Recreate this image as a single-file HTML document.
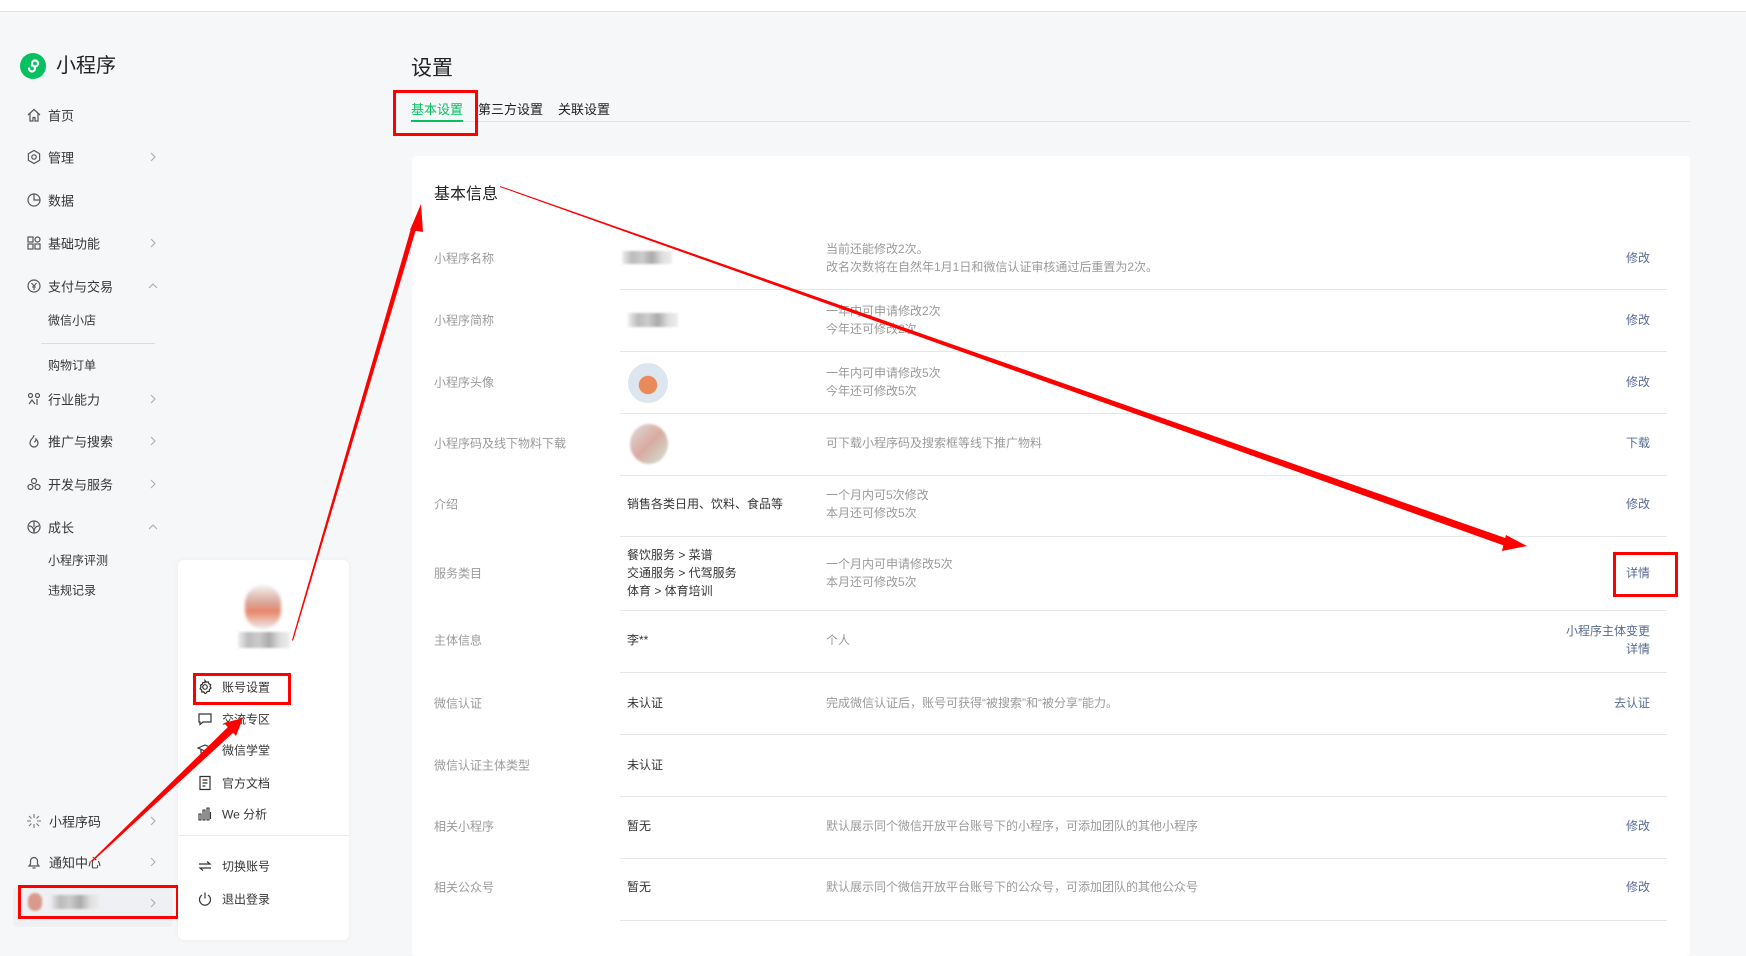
<!DOCTYPE html>
<html><head><meta charset="utf-8"><style>
*{margin:0;padding:0;box-sizing:border-box}
body{width:1746px;height:929px;overflow:hidden;background:#f6f7f9;font-family:"Liberation Sans","Noto Sans CJK SC",sans-serif;position:relative;color:#353535}
.a{position:absolute;white-space:nowrap}
.top{left:0;top:0;width:1746px;height:12px;background:#fff;border-bottom:1px solid #e4e4e4}
.nav{font-size:13px;color:#353535;left:48px;transform:translateY(-50%)}
.sub{font-size:12px;color:#353535;left:48px;transform:translateY(-50%)}
.ic{left:26px;width:16px;height:16px;transform:translateY(-50%)}
.chev{left:148px;width:10px;height:10px;transform:translateY(-50%)}
.card{left:412px;top:156px;width:1278px;height:800px;background:#fff;border-radius:4px}
.lbl{left:434px;font-size:12px;color:#9a9a9a;transform:translateY(-50%)}
.val{left:627px;font-size:12px;color:#353535;transform:translateY(-50%);line-height:18px}
.desc{left:826px;font-size:12px;color:#9a9a9a;transform:translateY(-50%);line-height:18px}
.act{right:96px;font-size:12px;color:#576b95;transform:translateY(-50%);text-align:right;line-height:18px}
.ln{left:620px;width:1047px;height:1px;background:#e7e7eb}
.pm{left:222px;font-size:12px;color:#353535;transform:translateY(-50%)}
.pi{left:197px;width:16px;height:16px;transform:translateY(-50%)}
.red{border:3px solid #f00}
.blur{background:linear-gradient(90deg,#eee,#bbb,#ccc,#aaa,#ddd,#eee);filter:blur(1px)}
</style></head><body>
<div class="a top"></div>

<!-- sidebar -->
<svg class="a" style="left:20px;top:53px" width="26" height="26" viewBox="0 0 26 26"><circle cx="13" cy="13" r="13" fill="#07c160"/><path d="M9 15.5a3 3 0 1 0 3-3v-2a3 3 0 1 1 3 3" stroke="#fff" stroke-width="2.2" fill="none" stroke-linecap="round"/></svg>
<div class="a" style="left:56px;top:53px;font-size:20px;line-height:26px;color:#222">小程序</div>

<svg class="a ic" style="top:115px" viewBox="0 0 16 16"><path d="M2 8L8 2.5 14 8M4 6.5V14h3v-3.5h2V14h3V6.5" fill="none" stroke="#555" stroke-width="1.2"/></svg>
<div class="a nav" style="top:115px">首页</div>
<svg class="a ic" style="top:157px" viewBox="0 0 16 16"><path d="M8 1.5l5.6 3.2v6.6L8 14.5 2.4 11.3V4.7z" fill="none" stroke="#555" stroke-width="1.2"/><circle cx="8" cy="8" r="2.2" fill="none" stroke="#555" stroke-width="1.2"/></svg>
<div class="a nav" style="top:157px">管理</div>
<svg class="a ic" style="top:200px" viewBox="0 0 16 16"><circle cx="8" cy="8" r="6" fill="none" stroke="#555" stroke-width="1.2"/><path d="M8 2v6h6" fill="none" stroke="#555" stroke-width="1.2"/></svg>
<div class="a nav" style="top:200px">数据</div>
<svg class="a ic" style="top:243px" viewBox="0 0 16 16"><g fill="none" stroke="#555" stroke-width="1.2"><rect x="2" y="2" width="5" height="5"/><circle cx="11.5" cy="4.5" r="2.5"/><rect x="2" y="9" width="5" height="5"/><rect x="9" y="9" width="5" height="5"/></g></svg>
<div class="a nav" style="top:243px">基础功能</div>
<svg class="a ic" style="top:286px" viewBox="0 0 16 16"><circle cx="8" cy="8" r="6" fill="none" stroke="#555" stroke-width="1.2"/><path d="M5.5 5l2.5 3 2.5-3M8 8v4M6 9h4" fill="none" stroke="#555" stroke-width="1.1"/></svg>
<div class="a nav" style="top:286px">支付与交易</div>
<div class="a sub" style="top:320px">微信小店</div>
<div class="a" style="left:41px;top:343px;width:114px;height:1px;background:#dcdde0"></div>
<div class="a sub" style="top:365px">购物订单</div>
<svg class="a ic" style="top:399px" viewBox="0 0 16 16"><g fill="none" stroke="#555" stroke-width="1.2"><circle cx="4.5" cy="4.5" r="2"/><circle cx="11.5" cy="4.5" r="2"/><path d="M3 13l3-4 3 4M11 8v6"/></g></svg>
<div class="a nav" style="top:399px">行业能力</div>
<svg class="a ic" style="top:441px" viewBox="0 0 16 16"><path d="M8 2c0 3-4 4-4 8a4 4 0 0 0 8 0c0-2-1-3-2-4 0 2-1 3-2 3" fill="none" stroke="#555" stroke-width="1.2"/></svg>
<div class="a nav" style="top:441px">推广与搜索</div>
<svg class="a ic" style="top:484px" viewBox="0 0 16 16"><g fill="none" stroke="#555" stroke-width="1.2"><circle cx="8" cy="5" r="2.5"/><circle cx="4.5" cy="11" r="2.5"/><circle cx="11.5" cy="11" r="2.5"/></g></svg>
<div class="a nav" style="top:484px">开发与服务</div>
<svg class="a ic" style="top:527px" viewBox="0 0 16 16"><g fill="none" stroke="#555" stroke-width="1.2"><circle cx="8" cy="8" r="6"/><path d="M3 7c3 0 5 2 5 7M13 7c-3 0-5 2-5 7M8 2v6"/></g></svg>
<div class="a nav" style="top:527px">成长</div>
<div class="a sub" style="top:560px">小程序评测</div>
<div class="a sub" style="top:590px">违规记录</div>

<svg class="a chev" style="top:157px" viewBox="0 0 10 10"><path d="M3 1l4 4-4 4" fill="none" stroke="#aaa"/></svg>
<svg class="a chev" style="top:243px" viewBox="0 0 10 10"><path d="M3 1l4 4-4 4" fill="none" stroke="#aaa"/></svg>
<svg class="a chev" style="top:286px" viewBox="0 0 10 10"><path d="M1 7l4-4 4 4" fill="none" stroke="#aaa"/></svg>
<svg class="a chev" style="top:399px" viewBox="0 0 10 10"><path d="M3 1l4 4-4 4" fill="none" stroke="#aaa"/></svg>
<svg class="a chev" style="top:441px" viewBox="0 0 10 10"><path d="M3 1l4 4-4 4" fill="none" stroke="#aaa"/></svg>
<svg class="a chev" style="top:484px" viewBox="0 0 10 10"><path d="M3 1l4 4-4 4" fill="none" stroke="#aaa"/></svg>
<svg class="a chev" style="top:527px" viewBox="0 0 10 10"><path d="M1 7l4-4 4 4" fill="none" stroke="#aaa"/></svg>

<svg class="a ic" style="top:821px" viewBox="0 0 16 16"><g stroke="#777" stroke-width="1.1"><path d="M8 1v4M8 11v4M1 8h4M11 8h4M3 3l2.5 2.5M10.5 10.5L13 13M13 3l-2.5 2.5M5.5 10.5L3 13"/></g></svg>
<div class="a nav" style="top:821px;left:49px">小程序码</div>
<svg class="a chev" style="top:821px" viewBox="0 0 10 10"><path d="M3 1l4 4-4 4" fill="none" stroke="#aaa"/></svg>
<svg class="a ic" style="top:862px" viewBox="0 0 16 16"><path d="M3 12h10l-1.5-2V7a3.5 3.5 0 0 0-7 0v3zM6.5 14h3" fill="none" stroke="#555" stroke-width="1.2"/></svg>
<div class="a nav" style="top:862px;left:49px">通知中心</div>
<svg class="a chev" style="top:862px" viewBox="0 0 10 10"><path d="M3 1l4 4-4 4" fill="none" stroke="#aaa"/></svg>
<div class="a" style="left:13px;top:887px;width:160px;height:40px;background:#eef0f3;border-radius:4px"></div>
<div class="a" style="left:28px;top:893px;width:14px;height:18px;background:#d89a8a;border-radius:7px;filter:blur(1px)"></div>
<div class="a blur" style="left:50px;top:895px;width:50px;height:14px"></div>
<svg class="a chev" style="top:903px" viewBox="0 0 10 10"><path d="M3 1l4 4-4 4" fill="none" stroke="#aaa"/></svg>
<div class="a red" style="left:18px;top:885px;width:161px;height:34px"></div>

<!-- popup -->
<div class="a" style="left:178px;top:560px;width:171px;height:380px;background:#fff;border-radius:6px;box-shadow:0 0 6px rgba(0,0,0,.05)"></div>
<div class="a" style="left:245px;top:585px;width:36px;height:44px;background:linear-gradient(#f3f3f3,#d9a79a 40%,#e8856a 60%,#eee);border-radius:18px;filter:blur(1.5px)"></div>
<div class="a blur" style="left:238px;top:632px;width:52px;height:16px"></div>
<svg class="a pi" style="top:687px" viewBox="0 0 16 16"><g fill="none" stroke="#333" stroke-width="1.2"><circle cx="8" cy="8" r="2.3"/><path d="M8 1.5l1.2 1.6 2-.3.6 1.9 1.8.9-.5 1.9.9 1.7-1.6 1.2-.1 2-2 .1-1.2 1.6L8 14.5l-1.2-1.6-2 .1-.1-2-1.6-1.2.9-1.7-.5-1.9 1.8-.9.6-1.9 2 .3z"/></g></svg>
<div class="a pm" style="top:687px">账号设置</div>
<svg class="a pi" style="top:719px" viewBox="0 0 16 16"><path d="M2 3h12v8H6l-3 2.5V11H2z" fill="none" stroke="#333" stroke-width="1.2"/></svg>
<div class="a pm" style="top:719px">交流专区</div>
<svg class="a pi" style="top:750px" viewBox="0 0 16 16"><path d="M1 6l7-3 7 3-7 3zM4 7.5V11c2 2 6 2 8 0V7.5" fill="none" stroke="#333" stroke-width="1.2"/></svg>
<div class="a pm" style="top:750px">微信学堂</div>
<svg class="a pi" style="top:783px" viewBox="0 0 16 16"><path d="M3 1.5h10v13H3zM5.5 5h5M5.5 8h5M5.5 11h3" fill="none" stroke="#333" stroke-width="1.2"/></svg>
<div class="a pm" style="top:783px">官方文档</div>
<svg class="a pi" style="top:814px" viewBox="0 0 16 16"><path d="M2 14V8h2v6zM6 14V4h2v10zM10 14V2h2v12zM13.5 13V6" fill="none" stroke="#333" stroke-width="1.1"/></svg>
<div class="a pm" style="top:814px">We 分析</div>
<div class="a" style="left:178px;top:835px;width:171px;height:1px;background:#ececec"></div>
<svg class="a pi" style="top:866px" viewBox="0 0 16 16"><path d="M2 6h11l-3-2.5M14 10H3l3 2.5" fill="none" stroke="#333" stroke-width="1.2"/></svg>
<div class="a pm" style="top:866px">切换账号</div>
<svg class="a pi" style="top:899px" viewBox="0 0 16 16"><path d="M5 4a5.5 5.5 0 1 0 6 0M8 1.5v6" fill="none" stroke="#333" stroke-width="1.2"/></svg>
<div class="a pm" style="top:899px">退出登录</div>
<div class="a red" style="left:193px;top:673px;width:98px;height:32px"></div>

<!-- main -->
<div class="a" style="left:411px;top:52px;font-size:21px;color:#222">设置</div>
<div class="a" style="left:411px;top:121px;width:1279px;height:1px;background:#e4e4e4"></div>
<div class="a" style="left:411px;top:99px;font-size:13px;color:#07c160">基本设置</div>
<div class="a" style="left:411px;top:120px;width:52px;height:2px;background:#07c160"></div>
<div class="a" style="left:478px;top:99px;font-size:13px;color:#222">第三方设置</div>
<div class="a" style="left:558px;top:99px;font-size:13px;color:#222">关联设置</div>
<div class="a red" style="left:393px;top:90px;width:85px;height:46px"></div>

<div class="a card"></div>
<div class="a" style="left:434px;top:180px;font-size:16px;color:#222">基本信息</div>

<div class="a ln" style="top:289px"></div>
<div class="a ln" style="top:351px"></div>
<div class="a ln" style="top:413px"></div>
<div class="a ln" style="top:475px"></div>
<div class="a ln" style="top:536px"></div>
<div class="a ln" style="top:610px"></div>
<div class="a ln" style="top:672px"></div>
<div class="a ln" style="top:734px"></div>
<div class="a ln" style="top:796px"></div>
<div class="a ln" style="top:858px"></div>
<div class="a ln" style="top:920px"></div>

<div class="a lbl" style="top:258px">小程序名称</div>
<div class="a blur" style="left:622px;top:251px;width:50px;height:13px"></div>
<div class="a desc" style="top:258px">当前还能修改2次。<br>改名次数将在自然年1月1日和微信认证审核通过后重置为2次。</div>
<div class="a act" style="top:258px">修改</div>

<div class="a lbl" style="top:320px">小程序简称</div>
<div class="a blur" style="left:628px;top:313px;width:50px;height:14px"></div>
<div class="a desc" style="top:320px">一年内可申请修改2次<br>今年还可修改2次</div>
<div class="a act" style="top:320px">修改</div>

<div class="a lbl" style="top:382px">小程序头像</div>
<div class="a" style="left:628px;top:363px;width:40px;height:40px;border-radius:50%;background:radial-gradient(circle at 50% 55%,#e98a5a 0,#e98a5a 30%,#dde6ef 32%)"></div>
<div class="a desc" style="top:382px">一年内可申请修改5次<br>今年还可修改5次</div>
<div class="a act" style="top:382px">修改</div>

<div class="a lbl" style="top:443px">小程序码及线下物料下载</div>
<div class="a" style="left:630px;top:424px;width:38px;height:40px;border-radius:50%;background:linear-gradient(135deg,#ddd,#d9aaa0 50%,#cfe8d9);filter:blur(1px)"></div>
<div class="a desc" style="top:443px">可下载小程序码及搜索框等线下推广物料</div>
<div class="a act" style="top:443px">下载</div>

<div class="a lbl" style="top:504px">介绍</div>
<div class="a val" style="top:504px">销售各类日用、饮料、食品等</div>
<div class="a desc" style="top:504px">一个月内可5次修改<br>本月还可修改5次</div>
<div class="a act" style="top:504px">修改</div>

<div class="a lbl" style="top:573px">服务类目</div>
<div class="a val" style="top:573px">餐饮服务 &gt; 菜谱<br>交通服务 &gt; 代驾服务<br>体育 &gt; 体育培训</div>
<div class="a desc" style="top:573px">一个月内可申请修改5次<br>本月还可修改5次</div>
<div class="a act" style="top:573px">详情</div>
<div class="a red" style="left:1613px;top:552px;width:65px;height:45px"></div>

<div class="a lbl" style="top:640px">主体信息</div>
<div class="a val" style="top:640px">李**</div>
<div class="a desc" style="top:640px">个人</div>
<div class="a act" style="top:640px">小程序主体变更<br>详情</div>

<div class="a lbl" style="top:703px">微信认证</div>
<div class="a val" style="top:703px">未认证</div>
<div class="a desc" style="top:703px">完成微信认证后，账号可获得“被搜索”和“被分享”能力。</div>
<div class="a act" style="top:703px">去认证</div>

<div class="a lbl" style="top:765px">微信认证主体类型</div>
<div class="a val" style="top:765px">未认证</div>

<div class="a lbl" style="top:826px">相关小程序</div>
<div class="a val" style="top:826px">暂无</div>
<div class="a desc" style="top:826px">默认展示同个微信开放平台账号下的小程序，可添加团队的其他小程序</div>
<div class="a act" style="top:826px">修改</div>

<div class="a lbl" style="top:887px">相关公众号</div>
<div class="a val" style="top:887px">暂无</div>
<div class="a desc" style="top:887px">默认展示同个微信开放平台账号下的公众号，可添加团队的其他公众号</div>
<div class="a act" style="top:887px">修改</div>

<!-- arrows -->
<svg class="a" style="left:0;top:0" width="1746" height="929">
<polygon points="292,640 293,641 417,226 412,225" fill="#f00"/>
<polygon points="421,204 410,230 423,232" fill="#f00"/>
<polygon points="500,186 500,187 1508,547 1511,540" fill="#f00"/>
<polygon points="1527,546 1506,535 1502,551" fill="#f00"/>
<polygon points="91,861 92,862 235,731 230,725" fill="#f00"/>
<polygon points="243,718 224,723 236,736" fill="#f00"/>
</svg>
</body></html>
